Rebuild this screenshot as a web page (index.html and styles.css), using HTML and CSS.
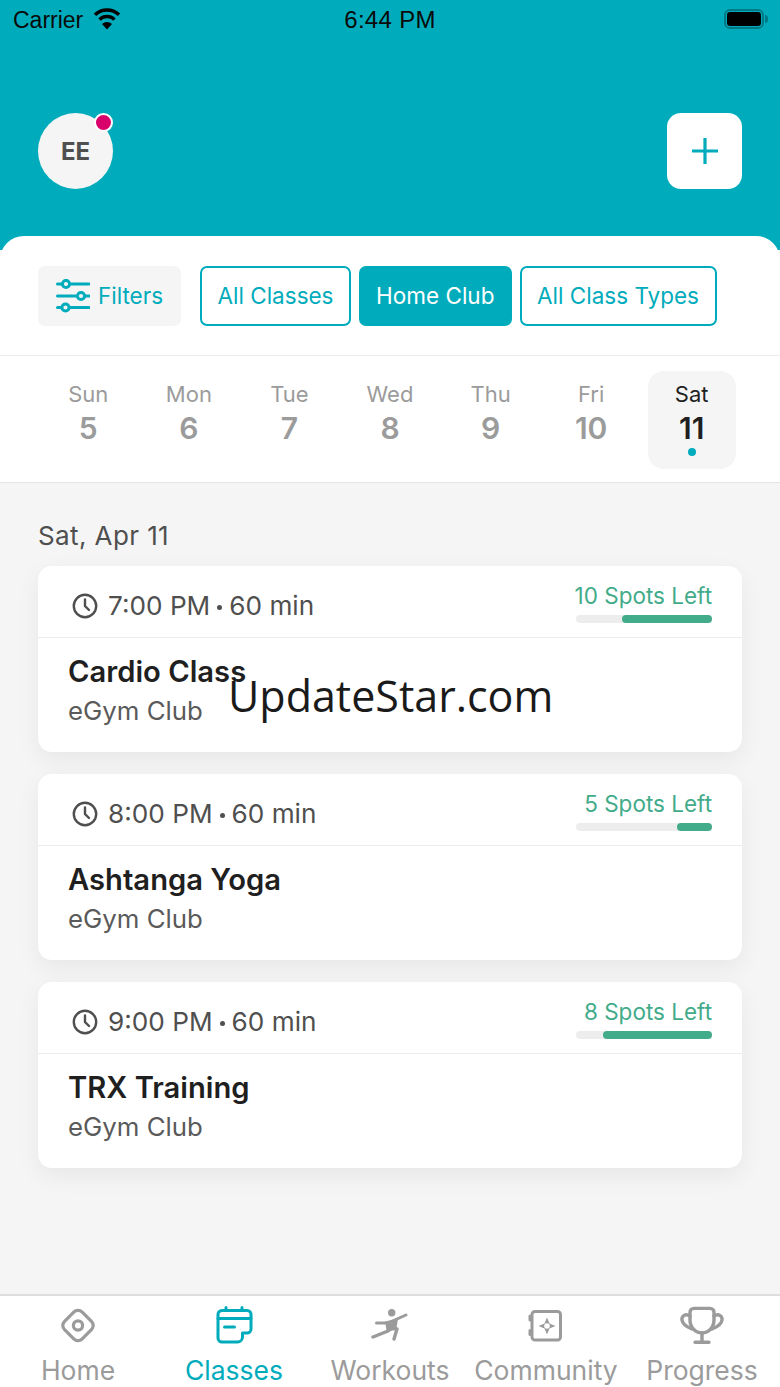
FILE: index.html
```html
<!DOCTYPE html>
<html lang="en">
<head>
<meta charset="utf-8">
<title>Classes</title>
<link rel="stylesheet" href="styles.css">
</head>
<body>
<div class="app">
  <header class="top">
    <div class="status">
      <div class="status-left">
        <span>Carrier</span>
        <svg class="wifi" viewBox="0 0 28 22" width="28" height="22"><path d="M14 21.500L9 16a7 7 0 0 1 10 0z" fill="#000"/><path d="M6.500 11.500a11 11 0 0 1 15 0M2 6.800a17.500 17.500 0 0 1 24 0" fill="none" stroke="#000" stroke-width="3.400"/></svg>
      </div>
      <span class="clock">6:44 PM</span>
      <div class="battery"><span class="battery-fill"></span></div>
    </div>
    <div class="top-actions">
      <div class="avatar">EE<span class="badge"></span></div>
      <button class="add">
        <svg viewBox="0 0 28 28" width="28" height="28"><path d="M14 1v26M1 14h26" fill="none" stroke="#00acbc" stroke-width="3.200"/></svg>
      </button>
    </div>
  </header>
  <section class="sheet">
    <div class="filters">
      <button class="chip chip-grey">
        <svg viewBox="0 0 34 34" width="34" height="34"><g fill="none" stroke="#00acbc" stroke-width="3" stroke-linecap="round"><path d="M1.500 5h4M15 5h18M1.500 17h18M29.500 17h3.500M1.500 28.500h3.500M14.500 28.500h18.500"/><circle cx="10" cy="5" r="3.600"/><circle cx="25" cy="17" r="3.600"/><circle cx="9.500" cy="28.500" r="3.600"/></g></svg>
        Filters
      </button>
      <button class="chip chip-line w-all">All Classes</button>
      <button class="chip chip-on w-home">Home Club</button>
      <button class="chip chip-line w-types">All Class Types</button>
    </div>
    <div class="days">
      <div class="day"><span class="dn">Sun</span><span class="dd">5</span></div>
      <div class="day"><span class="dn">Mon</span><span class="dd">6</span></div>
      <div class="day"><span class="dn">Tue</span><span class="dd">7</span></div>
      <div class="day"><span class="dn">Wed</span><span class="dd">8</span></div>
      <div class="day"><span class="dn">Thu</span><span class="dd">9</span></div>
      <div class="day"><span class="dn">Fri</span><span class="dd">10</span></div>
      <div class="day day-on"><span class="day-box"></span><span class="dn">Sat</span><span class="dd">11</span><span class="dot"></span></div>
    </div>
  </section>
  <main class="list">
    <h2 class="date">Sat, Apr 11</h2>
    <article class="card">
      <div class="card-top">
        <div class="time">
          <svg viewBox="0 0 26 26" width="26" height="26"><g fill="none" stroke="#4f4f4f" stroke-width="2.400" stroke-linecap="round"><circle cx="13" cy="13" r="11.200"/><path d="M13 6.500V13l4 4"/></g></svg>
          <span>7:00 PM<i class="sep"></i>60 min</span>
        </div>
        <div class="spots"><span>10 Spots Left</span><div class="bar"><div class="bar-fill" style="width:66%"></div></div></div>
      </div>
      <div class="card-body"><h3>Cardio Class</h3><p>eGym Club</p></div>
    </article>
    <article class="card">
      <div class="card-top">
        <div class="time">
          <svg viewBox="0 0 26 26" width="26" height="26"><g fill="none" stroke="#4f4f4f" stroke-width="2.400" stroke-linecap="round"><circle cx="13" cy="13" r="11.200"/><path d="M13 6.500V13l4 4"/></g></svg>
          <span>8:00 PM<i class="sep"></i>60 min</span>
        </div>
        <div class="spots"><span>5 Spots Left</span><div class="bar"><div class="bar-fill" style="width:26%"></div></div></div>
      </div>
      <div class="card-body"><h3>Ashtanga Yoga</h3><p>eGym Club</p></div>
    </article>
    <article class="card">
      <div class="card-top">
        <div class="time">
          <svg viewBox="0 0 26 26" width="26" height="26"><g fill="none" stroke="#4f4f4f" stroke-width="2.400" stroke-linecap="round"><circle cx="13" cy="13" r="11.200"/><path d="M13 6.500V13l4 4"/></g></svg>
          <span>9:00 PM<i class="sep"></i>60 min</span>
        </div>
        <div class="spots"><span>8 Spots Left</span><div class="bar"><div class="bar-fill" style="width:80%"></div></div></div>
      </div>
      <div class="card-body"><h3>TRX Training</h3><p>eGym Club</p></div>
    </article>
  </main>
  <nav class="tabs">
    <div class="tab">
      <svg viewBox="0 0 38 38" width="38" height="38"><g fill="none" stroke="#9b9b9b" stroke-width="3.200"><rect x="6.500" y="7" width="25" height="25" rx="6" transform="rotate(45 19 19.500)"/><circle cx="19" cy="19.500" r="4.600"/></g></svg>
      <span>Home</span>
    </div>
    <div class="tab on">
      <svg viewBox="0 0 38 38" width="38" height="38"><g fill="none" stroke="#00acbc" stroke-width="3" stroke-linecap="round" stroke-linejoin="round"><path d="M7 4.500h25a4 4 0 0 1 4 4V23a4 4 0 0 1-4 4h-4.500v4a5 5 0 0 1-5 5H7a4 4 0 0 1-4-4V8.500a4 4 0 0 1 4-4z"/><path d="M3 12.500h33M11 1.500v3M27 1.500v3M9.500 21h10"/></g></svg>
      <span>Classes</span>
    </div>
    <div class="tab">
      <svg viewBox="0 0 38 38" width="38" height="38"><circle cx="20.700" cy="6.700" r="3.700" fill="#9b9b9b"/><path d="M14 15.500L27 12.500L25.500 22L16 27z" fill="#9b9b9b"/><g fill="none" stroke="#9b9b9b" stroke-linecap="round" stroke-linejoin="round"><path d="M5.500 17H17L35 9" stroke-width="3"/><path d="M17 25L2 31" stroke-width="3.400"/><path d="M20 22.500L26 23L23 33" stroke-width="3.400"/></g></svg>
      <span>Workouts</span>
    </div>
    <div class="tab">
      <svg viewBox="0 0 38 38" width="38" height="38"><rect x="5" y="5.500" width="28.500" height="28.500" rx="3" fill="none" stroke="#9b9b9b" stroke-width="3"/><path d="M3 10v4M3 24.500v4" fill="none" stroke="#9b9b9b" stroke-width="3" stroke-linecap="round"/><path d="M20 11.500L22.500 17.500L28.500 20L22.500 22.500L20 28.500L17.500 22.500L11.500 20L17.500 17.500z" fill="#9b9b9b"/><circle cx="20" cy="20" r="2.800" fill="#fff"/></svg>
      <span>Community</span>
    </div>
    <div class="tab">
      <svg viewBox="0 0 44 38" width="44" height="38"><g fill="none" stroke="#9b9b9b" stroke-width="3.400" stroke-linecap="round" stroke-linejoin="round"><path d="M14 2.400H30a4 4 0 0 1 4 4V14a12 13 0 0 1-24 0V6.400a4 4 0 0 1 4-4z"/><path d="M10 10C5.500 7 1.500 10 2 14C2.500 18 7 21 12 23M34 10C38.500 7 42.500 10 42 14C41.500 18 37 21 32 23M22 27v9M15 36.300h14"/></g></svg>
      <span>Progress</span>
    </div>
  </nav>
  <div class="watermark">UpdateStar.com</div>
</div>
</body>
</html>
```
FILE: styles.css
```css
* { box-sizing: border-box; }
html, body { margin: 0; padding: 0; }
body { font-family: Inter, "Liberation Sans", sans-serif; background: #f5f5f5; }
button { font-family: inherit; border: 0; padding: 0; }
h2, h3, p { margin: 0; font-weight: inherit; }
.app { position: relative; width: 780px; height: 1387px; display: flex; flex-direction: column; overflow: hidden; background: #f5f5f5; }

.top { height: 250px; flex: none; background: #00acbc; display: flex; flex-direction: column; margin-bottom: -14px; }
.status { height: 40px; display: flex; align-items: center; justify-content: space-between; padding: 0 16px 0 13px; position: relative; font-family: "Liberation Sans", sans-serif; color: #0a0a0a; font-size: 23px; }
.status-left { display: flex; align-items: center; gap: 10px; }
.wifi { margin-top: -2px; }
.clock { position: absolute; left: 0; right: 0; text-align: center; font-size: 24px; letter-spacing: .3px; }
.battery { width: 40px; height: 20px; border: 2px solid #007a86; border-radius: 6px; padding: 1px; margin-top: -2px; position: relative; }
.battery::after { content: ""; position: absolute; right: -6px; top: 4px; width: 3px; height: 8px; background: #007a86; border-radius: 0 3px 3px 0; }
.battery-fill { display: block; height: 100%; background: #000; border-radius: 3px; }
.top-actions { display: flex; justify-content: space-between; align-items: flex-start; padding: 73px 38px 0; }
.avatar { position: relative; width: 75px; height: 76px; border-radius: 50%; background: #f5f5f5; color: #4f4f4f; font-size: 24px; font-weight: 700; display: flex; align-items: center; justify-content: center; }
.badge { position: absolute; top: 0; right: 0; width: 19px; height: 19px; border-radius: 50%; background: #d9006c; border: 2px solid #fff; }
.add { width: 75px; height: 76px; border-radius: 14px; background: #fff; display: flex; align-items: center; justify-content: center; }

.sheet { position: relative; flex: none; background: #fff; border-radius: 24px 24px 0 0; border-bottom: 1px solid #e4e4e4; }
.filters { height: 120px; display: flex; align-items: center; gap: 8px; padding: 0 38px; border-bottom: 1px solid #ececec; }
.chip { height: 60px; border-radius: 7px; font-size: 22.5px; display: flex; align-items: center; justify-content: center; flex: none; }
.chip-grey { width: 143px; margin-right: 11px; gap: 8px; background: #f5f5f5; color: #00acbc; }
.chip-line { background: #fff; border: 2px solid #00acbc; color: #00acbc; }
.chip-on { background: #00acbc; color: #fff; }
.w-all { width: 151px; }
.w-home { width: 152.500px; }
.w-types { width: 197px; }
.days { height: 126px; display: grid; grid-template-columns: repeat(7, 1fr); padding: 15px 38px 13px; }
.day { display: flex; flex-direction: column; align-items: center; padding-top: 10px; color: #9b9b9b; position: relative; }
.day-on { color: #1f1f1f; }
.day-box { position: absolute; top: 0; bottom: 0; left: 50%; width: 88px; margin-left: -44px; background: #f5f5f5; border-radius: 16px; }
.dn, .dd { position: relative; }
.dn { font-size: 22px; line-height: 27px; }
.dd { font-size: 30px; font-weight: 600; line-height: 40px; }
.dot { position: absolute; left: 50%; bottom: 13px; width: 8px; height: 8px; margin-left: -4px; border-radius: 50%; background: #00acbc; }

.list { flex: 1 1 auto; padding: 37px 38px 0; display: flex; flex-direction: column; gap: 22px; }
.date { font-size: 26px; line-height: 32px; letter-spacing: .4px; color: #4f4f4f; margin-bottom: -8px; }
.card { background: #fff; border-radius: 14px; height: 186px; box-shadow: 0 8px 24px rgba(0, 0, 0, .06); }
.card-top { height: 72px; padding: 0 30px 0 34px; display: flex; justify-content: space-between; align-items: center; border-bottom: 1px solid #ececec; }
.time { display: flex; align-items: center; gap: 10px; font-size: 26.2px; color: #4f4f4f; padding-top: 8px; }
.sep { display: inline-block; width: 5px; height: 5px; border-radius: 50%; background: #4f4f4f; margin: 0 7px; vertical-align: middle; }
.spots { display: flex; flex-direction: column; align-items: flex-end; gap: 5px; font-size: 22.5px; line-height: 28px; color: #42ab8a; margin-top: 1px; }
.bar { width: 136px; height: 8px; border-radius: 4px; background: #ededed; display: flex; justify-content: flex-end; }
.bar-fill { height: 100%; border-radius: 4px; background: #42ab8a; }
.card-body { padding: 16px 30px 0; }
.card-body h3 { font-size: 29.200px; font-weight: 600; line-height: 36px; color: #1f1f1f; }
.card-body p { font-size: 25.800px; line-height: 36px; color: #5a5a5a; margin-top: 3px; }

.tabs { height: 93px; flex: none; background: #fff; border-top: 2px solid #dedede; display: grid; grid-template-columns: repeat(5, 156px); }
.tab { display: flex; flex-direction: column; align-items: center; color: #9b9b9b; font-size: 26.500px; line-height: 32px; padding-top: 10px; gap: 10px; white-space: nowrap; }
.tab svg { flex: none; }
.tab.on { color: #00acbc; }
.watermark { position: absolute; left: 228px; top: 666px; font-family: "Open Sans", sans-serif; font-size: 43px; line-height: 60px; color: #1a1a1a; white-space: nowrap; }
```
